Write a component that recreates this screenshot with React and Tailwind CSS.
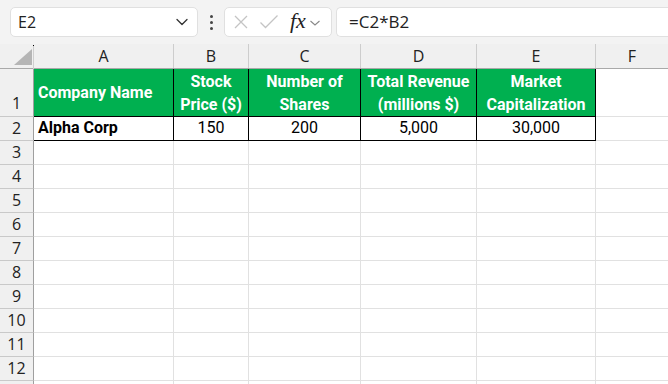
import React from "react";

const cols = [
  { k: "A", w: "w-[140px]" },
  { k: "B", w: "w-[75px]" },
  { k: "C", w: "w-[112px]" },
  { k: "D", w: "w-[116px]" },
  { k: "E", w: "w-[119px]" },
  { k: "F", w: "flex-1" },
];

const headers = [
  ["Company Name"],
  ["Stock", "Price ($)"],
  ["Number of", "Shares"],
  ["Total Revenue", "(millions $)"],
  ["Market", "Capitalization"],
];

const row2 = ["Alpha Corp", "150", "200", "5,000", "30,000"];

const ui = { fontFamily: '"Open Sans", "Noto Sans", sans-serif' };
const cell = { fontFamily: 'Roboto, "Liberation Sans", sans-serif' };

function Chevron({ className }) {
  return (
    <svg className={className} width="14" height="10" viewBox="0 0 14 10" fill="none">
      <path d="M2 2.5 L7 7.5 L12 2.5" stroke="#333" strokeWidth="1.3" strokeLinecap="round" strokeLinejoin="round" />
    </svg>
  );
}

export default function App() {
  return (
    <div className="w-[668px] h-[384px] overflow-hidden bg-white flex flex-col" style={ui}>
      {/* formula bar */}
      <div className="h-[44px] bg-[#f3f3f3] flex items-start pt-[7px] pl-[10px] shrink-0">
        <div className="w-[188px] h-[30px] bg-white border border-[#e0e0e0] rounded-[5px] flex items-center pl-[7px] pr-[8px] justify-between">
          <span className="text-[16px] text-[#222]">E2</span>
          <Chevron />
        </div>
        <div className="w-[26px] h-[30px] flex flex-col items-center justify-center gap-[3px]">
          <span className="w-[3px] h-[3px] bg-[#444] rounded-full"></span>
          <span className="w-[3px] h-[3px] bg-[#444] rounded-full"></span>
          <span className="w-[3px] h-[3px] bg-[#444] rounded-full"></span>
        </div>
        <div className="w-[108px] h-[30px] bg-white border border-[#e0e0e0] rounded-[5px] flex items-center pl-[8px]">
          <svg width="16" height="16" viewBox="0 0 16 16" fill="none">
            <path d="M2 2 L14 14 M14 2 L2 14" stroke="#c4c4c4" strokeWidth="1.3" />
          </svg>
          <svg className="ml-[10px]" width="20" height="16" viewBox="0 0 20 16" fill="none">
            <path d="M1.5 8.5 L6.5 13.5 L18.5 1.5" stroke="#c4c4c4" strokeWidth="1.3" />
          </svg>
          <span className="ml-[11px] text-[22px] italic leading-none text-[#222] mt-[-3px]" style={{ fontFamily: '"Liberation Serif", "DejaVu Serif", serif' }}>
            fx
          </span>
          <svg className="ml-[3px] mt-[2px]" width="12" height="8" viewBox="0 0 12 8" fill="none">
            <path d="M1.5 2 L6 6 L10.5 2" stroke="#888" strokeWidth="1.1" />
          </svg>
        </div>
        <div className="ml-[4px] flex-1 h-[30px] bg-white border border-[#e0e0e0] border-r-0 rounded-l-[5px] flex items-center pl-[12px]">
          <span className="text-[17px] text-[#222]">=C2*B2</span>
        </div>
      </div>

      {/* column header row */}
      <div className="flex h-[25px] bg-[#f0f0f0] border-b border-[#a9a9a9] shrink-0">
        <div className="w-[34px] h-full relative border-r border-[#cfcfcf] mt-[1px]">
          <svg className="absolute left-[14px] top-[4px]" width="18" height="16" viewBox="0 0 18 16">
            <path d="M18 0 L18 16 L0 16 Z" fill="#b5b5b5" />
          </svg>
          <span className="absolute right-[-1px] top-[0px] w-[1px] h-[1px] bg-black"></span>
        </div>
        {cols.map((c) => (
          <div
            key={c.k}
            className={`${c.w} h-full flex items-center justify-center text-[16px] text-[#222] ${c.k !== "F" ? "border-r border-[#cdcdcd]" : ""}`}
          >
            {c.k}
          </div>
        ))}
      </div>

      {/* row 1 */}
      <div className="flex h-[48px] shrink-0">
        <div className="w-[34px] bg-[#f0f0f0] border-r border-[#9f9f9f] border-b border-b-[#c9c9c9] flex items-end justify-center pb-[1px] text-[16px] text-[#222]">
          1
        </div>
        {cols.map((c, i) =>
          i < 5 ? (
            <div
              key={c.k}
              className={`${c.w} bg-[#00b050] border-r border-b border-black flex flex-col justify-center text-white font-bold text-[16px] leading-[23px] ${i === 0 ? "items-start pl-[4px]" : "items-center"}`}
              style={cell}
            >
              {headers[i].map((t) => (
                <span key={t}>{t}</span>
              ))}
            </div>
          ) : (
            <div key={c.k} className={`${c.w} border-b border-[#e1e1e1]`}></div>
          )
        )}
      </div>

      {/* row 2 */}
      <div className="flex h-[24px] shrink-0">
        <div className="w-[34px] bg-[#f0f0f0] border-r border-[#9f9f9f] border-b border-b-[#c9c9c9] flex items-end justify-center text-[16px] text-[#222]">
          2
        </div>
        {cols.map((c, i) =>
          i < 5 ? (
            <div
              key={c.k}
              className={`${c.w} border-r border-b border-black flex items-end text-[16px] text-black ${i === 0 ? "justify-start pl-[4px] font-bold" : "justify-center"}`}
              style={cell}
            >
              {row2[i]}
            </div>
          ) : (
            <div key={c.k} className={`${c.w} border-b border-[#e1e1e1]`}></div>
          )
        )}
      </div>

      {/* empty rows */}
      {[3, 4, 5, 6, 7, 8, 9, 10, 11, 12, 13].map((r) => (
        <div key={r} className="flex h-[24px] shrink-0">
          <div className="w-[34px] bg-[#f0f0f0] border-r border-[#9f9f9f] border-b border-b-[#c9c9c9] flex items-end justify-center text-[16px] text-[#222]">
            {r < 13 ? r : ""}
          </div>
          {cols.map((c, i) => (
            <div
              key={c.k}
              className={`${c.w} border-b border-[#e1e1e1] ${i < 5 ? "border-r border-r-[#e1e1e1]" : ""}`}
            ></div>
          ))}
        </div>
      ))}
    </div>
  );
}
